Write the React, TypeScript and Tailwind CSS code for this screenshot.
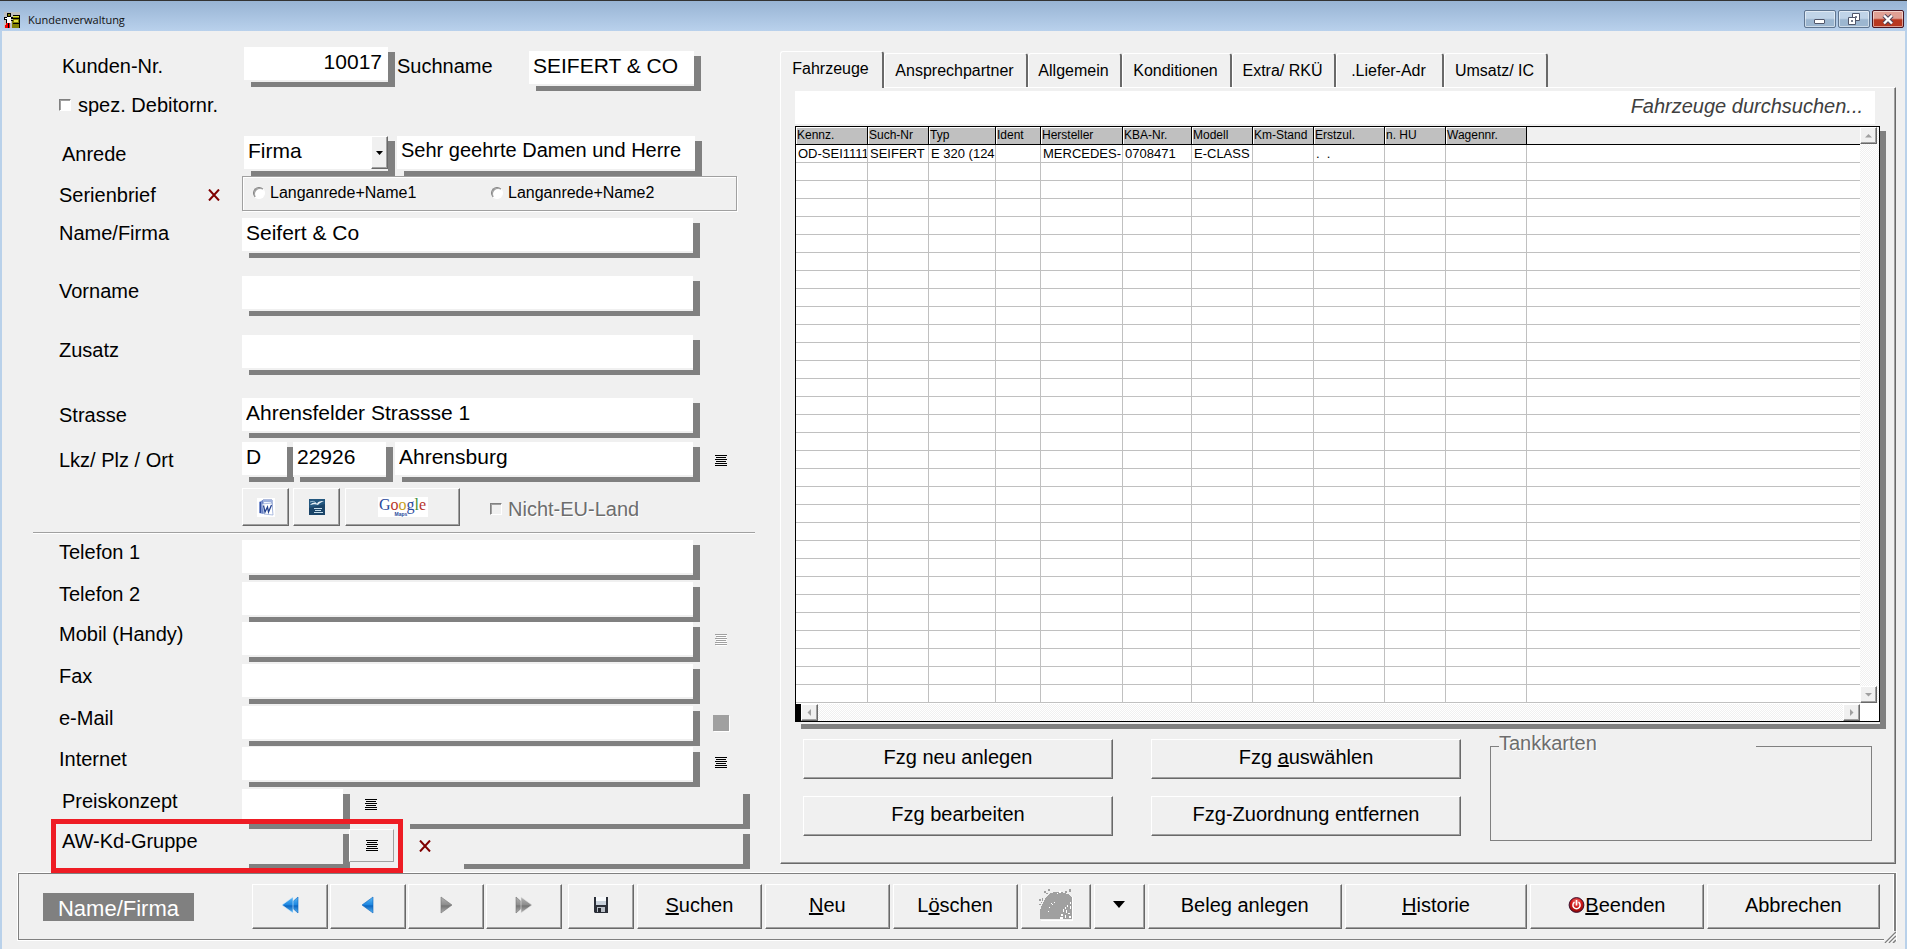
import { useState } from 'react';
import type { ReactNode } from 'react';
import clsx from 'clsx';

const raised =
  'border border-t-white border-l-white border-r-[#696969] border-b-[#696969] bg-[#f0f0f0] shadow-[inset_-1px_-1px_0_#a0a0a0]';
const dropShadow = 'shadow-[0_2px_0_#f0f0f0,7px_5px_0_#808080,7px_7px_0_#808080]';
const track = 'bg-[repeating-conic-gradient(#fff_0_25%,#f0f0f0_0_50%)] bg-[length:2px_2px]';

const tabs = [
  { name: 'Fahrzeuge', width: 'w-[104px]' },
  { name: 'Ansprechpartner', width: 'w-[144px]' },
  { name: 'Allgemein', width: 'w-[94px]' },
  { name: 'Konditionen', width: 'w-[110px]' },
  { name: 'Extra/ RKÜ', width: 'w-[104px]' },
  { name: '.Liefer-Adr', width: 'w-[108px]' },
  { name: 'Umsatz/ IC', width: 'w-[104px]' }
];

const columns = [
  { name: 'Kennz.', width: 'w-[72px]' },
  { name: 'Such-Nr', width: 'w-[61px]' },
  { name: 'Typ', width: 'w-[67px]' },
  { name: 'Ident', width: 'w-[45px]' },
  { name: 'Hersteller', width: 'w-[82px]' },
  { name: 'KBA-Nr.', width: 'w-[69px]' },
  { name: 'Modell', width: 'w-[61px]' },
  { name: 'Km-Stand', width: 'w-[61px]' },
  { name: 'Erstzul.', width: 'w-[71px]' },
  { name: 'n. HU', width: 'w-[61px]' },
  { name: 'Wagennr.', width: 'w-[81px]' }
];

const vehicles = [
  ['OD-SEI1111', 'SEIFERT', 'E 320 (124', '', 'MERCEDES-', '0708471', 'E-CLASS', '', '.\u00a0\u00a0.', '', '']
];
const rowCount = 31;

const ListIcon = ({ disabled = false }: { disabled?: boolean }) => (
  <svg width="12" height="12" viewBox="0 0 12 12" shapeRendering="crispEdges">
    {disabled && <path d="M1 1.500h11M2 3.500h10M1 5.500h11M2 7.500h10M1 9.500h11M1 11.500h11" stroke="#fff" />}
    <path d="M0 .5h12M1 2.500h10M0 4.500h12M1 6.500h10M0 8.500h12M0 10.500h12" stroke={disabled ? '#a0a0a0' : '#000'} />
  </svg>
);

const CrossIcon = () => (
  <svg width="12" height="12" viewBox="0 0 12 12">
    <path d="M1 .5l10 11M11 .5l-10 11" stroke="#800000" strokeWidth="2" />
  </svg>
);

const AppIcon = () => (
  <svg width="16" height="16" viewBox="0 0 16 16" shapeRendering="crispEdges">
    <path d="M0 0h16v16H0z" fill="#c0c0c0" />
    <path d="M9 3h7v13H8V9h1z" fill="#808000" />
    <path d="M9 3h7v1H9zM8 6h8v1H8zM9 11h6v1H9zM7 8h2v1H7zM15 4h1v12h-1z" fill="#000" />
    <path d="M9 4h6v1H9zM10 8h4v2h-4z" fill="#e0e040" />
    <path d="M3 1h4v4H3zM0 5h9v2H7v4H2V8H0z" fill="#000" />
    <path d="M4 2h2v2H4z" fill="#808000" />
    <path d="M3 5h4v6H3zM1 6h2v1H1z" fill="#fff" />
    <path d="M2 11h2v5H1v-3h1zM5 11h1v5H5z" fill="#f00000" />
    <path d="M4 11h1v5H4z" fill="#000" />
  </svg>
);

const ArrowIcon = ({ back = false, double = false }: { back?: boolean; double?: boolean }) => {
  const light = back ? '#5cb8f5' : '#b4b4b4';
  const dark = back ? '#0a64c0' : '#747474';
  const id = back ? 'arrow-back' : 'arrow-forward';
  return (
    <svg width="18" height="18" viewBox="0 0 18 18" className={back ? '' : '-scale-x-100'}>
      <defs>
        <linearGradient id={id} x1="0" y1="0" x2="0" y2="1">
          <stop offset="0" stopColor={light} />
          <stop offset="0.5" stopColor={back ? '#1c86e0' : '#8c8c8c'} />
          <stop offset="0.55" stopColor={dark} />
          <stop offset="1" stopColor={light} />
        </linearGradient>
      </defs>
      {double ? (
        <>
          <path d="M17 1v16l-9-8z" fill={`url(#${id})`} stroke={dark} strokeWidth="0.6" />
          <path d="M12 1v16L1 9z" fill={`url(#${id})`} stroke={back ? '#d4ecff' : '#e4e4e4'} strokeWidth="0.6" />
        </>
      ) : (
        <path d="M14 1v16L3 9z" fill={`url(#${id})`} stroke={dark} strokeWidth="0.6" />
      )}
    </svg>
  );
};

const SaveIcon = () => (
  <svg width="16" height="16" viewBox="0 0 16 16">
    <path d="M1 0h14v16H2l-1-1z" fill="#2b2f38" />
    <path d="M3 0h10v8H3z" fill="#c9d2dc" />
    <path d="M3 0h10v4H3z" fill="#f8fafc" />
    <path d="M4 10h8v5H4z" fill="#b8bec6" />
    <path d="M5 11h3v4H5z" fill="#23262d" />
  </svg>
);

const WordIcon = () => (
  <svg width="18" height="19" viewBox="0 0 18 19">
    <path d="M0 0h18v19H0z" fill="#fff" />
    <path d="M2 4l4-2v14l-4-1z" fill="#7d93cf" />
    <path d="M6 2h9v13H6z" fill="#f4f7fd" stroke="#5b74b8" />
    <path d="M6 3h9" stroke="#9db0dd" strokeWidth="2" />
    <path d="M5 6l10-1 1 12-9-1z" fill="#fff" stroke="#8ea3d6" strokeWidth="0.7" />
    <path d="M6.500 7.500l1.500 6.500 2.500-5 1 5L14.500 7" fill="none" stroke="#24428f" strokeWidth="1.300" />
    <path d="M3.500 4v11" stroke="#2f4b9c" />
  </svg>
);

const WriterIcon = () => (
  <svg width="16" height="16" viewBox="0 0 16 16">
    <path d="M0 0h16v16H0z" fill="#1a4468" />
    <path d="M0 0h16v5L0 9z" fill="#23577f" />
    <path d="M1 6c3-3 6-3 7-1 1-3 4-3 7-3-2 1-5 2-6 4-2-1-4-1-8 0z" fill="#e8f1f7" />
    <path d="M1 3c3-1 4-1 6 1" stroke="#9dbdd2" fill="none" />
    <path d="M5 9.500h8M6 11.500h6M5 13.500h9" stroke="#c4dcea" />
  </svg>
);

const FoxIcon = () => (
  <svg width="34" height="32" viewBox="0 0 34 32" shapeRendering="crispEdges">
    <path d="M2 31h31V8h1v24H2z" fill="#fff" />
    <path d="M1 30V21l2-5 3-6 4-5 5-2h7l7 2 4 3v22z" fill="#a0a0a0" />
    <path
      d="M5 2h2v2H5zM9 0h2v2H9zM7 4h2v1H7zM26 2h2v2h-2zM30 0h2v3h-2zM0 10h2v2H0zM3 9h1v3H3zM0 15h2v1H0zM2 13h1v1H2z"
      fill="#a0a0a0"
    />
    <path
      d="M18 4h1v1h-1zM20 2h2v2h-2zM12 14h1v1h-1zM15 13h1v1h-1zM10 18h1v1h-1zM9 22h1v1H9zM13 15h1v1h-1zM31 13h1v2h-1zM28 16h1v2h-1zM26 18h1v2h-1zM31 17h1v3h-1zM24 20h1v3h-1zM27 21h1v3h-1zM22 25h2v2h-2zM21 28h3v2h-3zM26 26h1v3h-1zM29 24h2v1h-2zM30 27h2v2h-2z"
      fill="#fff"
    />
  </svg>
);

const PowerIcon = () => (
  <svg width="17" height="16" viewBox="0 0 16 16">
    <defs>
      <radialGradient id="power" cx="0.500" cy="0.300" r="0.700">
        <stop offset="0" stopColor="#f28080" />
        <stop offset="0.500" stopColor="#d01818" />
        <stop offset="1" stopColor="#8c0808" />
      </radialGradient>
    </defs>
    <circle cx="8" cy="8" r="7.400" fill="url(#power)" stroke="#3a1030" />
    <path d="M6 5.200a3.600 3.600 0 1 0 4 0" fill="none" stroke="#fff" strokeWidth="1.500" />
    <path d="M8 3v5.500" stroke="#fff" strokeWidth="1.500" />
  </svg>
);

const Row = ({
  label,
  id,
  height,
  labelPad = '',
  inset = 'pl-[57px]',
  extra,
  children
}: {
  label: string;
  id: string;
  height: string;
  labelPad?: string;
  inset?: string;
  extra?: ReactNode;
  children: ReactNode;
}) => (
  <div className={clsx('relative flex items-start', height, inset)}>
    <div className={clsx('flex w-[183px] shrink-0 items-center justify-between', labelPad)}>
      <label htmlFor={id} className="leading-6 whitespace-nowrap">
        {label}
      </label>
      {extra}
    </div>
    {children}
  </div>
);

const Field = ({
  id,
  value = '',
  width = 'w-[451px]',
  size = 'text-[21px]',
  className = '',
  label,
  readOnly = false
}: {
  id: string;
  value?: string;
  width?: string;
  size?: string;
  className?: string;
  label?: string;
  readOnly?: boolean;
}) => (
  <input
    id={id}
    type="text"
    defaultValue={value}
    aria-label={label}
    readOnly={readOnly}
    className={clsx(
      'h-[33px] shrink-0 px-1 pb-1 outline-none',
      readOnly ? 'bg-[#f0f0f0]' : 'bg-white',
      dropShadow,
      width,
      size,
      className
    )}
  />
);

const box =
  'size-3 shrink-0 appearance-none border border-t-[#808080] border-l-[#808080] border-r-white border-b-white shadow-[inset_1px_1px_0_#a0a0a0]';

const CustomerForm = () => (
  <form className="w-[778px] shrink-0 pt-4">
    <Row label="Kunden-Nr." id="kdnr" height="h-[46px]" inset="pl-[59px]" labelPad="pt-[7px] pl-px">
      <Field id="kdnr" value="10017" width="w-[144px]" className="pr-1.5 text-right" />
      <label htmlFor="suchname" className="w-[141px] pt-[7px] pl-[9px] leading-6">
        Suchname
      </label>
      <Field id="suchname" value="SEIFERT & CO" width="w-[165px]" className="mt-1" />
    </Row>
    <label className="flex h-[43px] items-start pl-[57px] leading-6">
      <input type="checkbox" className={clsx(box, 'mt-1.5 mr-[7px] bg-white')} />
      spez. Debitornr.
    </label>
    <Row label="Anrede" id="anrede" height="h-10" inset="pl-[59px]" labelPad="pt-1.5 pl-px">
      <div className={clsx('relative h-[33px] w-[144px] shrink-0', dropShadow)}>
        <select id="anrede" className="size-full appearance-none bg-white px-1 pb-1 text-[21px] outline-none">
          <option>Firma</option>
        </select>
        <span className={clsx('pointer-events-none absolute top-0 right-0 flex h-full w-[17px] items-center justify-center', raised)}>
          <svg width="7" height="4" viewBox="0 0 7 4">
            <path d="M0 0h7L3.500 4z" />
          </svg>
        </span>
      </div>
      <Field
        id="briefanrede"
        label="Briefanrede"
        value="Sehr geehrte Damen und Herre"
        width="w-[298px]"
        size="text-xl"
        className="ml-[9px]"
      />
    </Row>
    <Row
      label="Serienbrief"
      id="lang1"
      height="h-[42px]"
      labelPad="pt-[7px]"
      extra={
        <button type="button" aria-label="Serienbrief löschen" className="mr-[22px]">
          <CrossIcon />
        </button>
      }
    >
      <div className="relative flex h-[35px] w-[495px] border border-[#a0a0a0] pl-2.5 text-base leading-6 shadow-[1px_1px_0_#fff,inset_1px_1px_0_#fff]">
        <label className="flex w-[238px] items-start pt-1">
          <input id="lang1" name="serienbrief" type="radio" className={clsx(box, 'mt-1.5 mr-[5px] rounded-full bg-white')} />
          Langanrede+Name1
        </label>
        <label className="flex items-start pt-1">
          <input name="serienbrief" type="radio" className={clsx(box, 'mt-1.5 mr-[5px] rounded-full bg-white')} />
          Langanrede+Name2
        </label>
      </div>
    </Row>
    <Row label="Name/Firma" id="name" height="h-[58px]" labelPad="pt-[3px]">
      <Field id="name" value="Seifert & Co" />
    </Row>
    <Row label="Vorname" id="vorname" height="h-[59px]" labelPad="pt-[3px]">
      <Field id="vorname" />
    </Row>
    <Row label="Zusatz" id="zusatz" height="h-[63px]" labelPad="pt-[3px]">
      <Field id="zusatz" />
    </Row>
    <Row label="Strasse" id="strasse" height="h-[44px]" labelPad="pt-[5px]">
      <Field id="strasse" value="Ahrensfelder Strassse 1" />
    </Row>
    <Row label="Lkz/ Plz / Ort" id="lkz" height="h-[46px]" labelPad="pt-1.5">
      <Field id="lkz" value="D" width="w-[45px]" />
      <Field id="plz" label="Plz" value="22926" width="w-[93px]" className="ml-1.5" />
      <Field id="ort" label="Ort" value="Ahrensburg" width="w-[298px]" className="ml-[9px]" />
      <button type="button" aria-label="Ort wählen" className="mt-[13px] ml-[22px]">
        <ListIcon />
      </button>
    </Row>
    <div className="flex h-[44px] items-start pl-[240px]">
      <button type="button" aria-label="Word" className={clsx('flex h-[38px] w-[47px] items-center justify-center', raised)}>
        <WordIcon />
      </button>
      <button type="button" aria-label="Writer" className={clsx('ml-1 flex h-[38px] w-[47px] items-center justify-center', raised)}>
        <WriterIcon />
      </button>
      <button type="button" className={clsx('ml-[5px] flex h-[38px] w-[115px] items-center justify-center', raised)}>
        <span className="relative h-5 w-[50px] bg-white font-['Liberation_Serif',serif] text-base leading-4">
          <span className="text-[#2a4a9c]">G</span>
          <span className="text-[#b8342c]">o</span>
          <span className="text-[#c8a020]">o</span>
          <span className="text-[#2a4a9c]">g</span>
          <span className="text-[#3c8c34]">l</span>
          <span className="text-[#b8342c]">e</span>
          <span className="absolute bottom-0 left-[17px] font-['Liberation_Sans',sans-serif] text-[5px] leading-[5px] font-bold text-[#2a4a9c]">
            Maps
          </span>
        </span>
      </button>
      <label className="flex items-start pt-[9px] pl-[30px] leading-6 text-[#6d6d6d] [text-shadow:1px_1px_0_#fff]">
        <input type="checkbox" disabled className={clsx(box, 'mt-1.5 mr-1.5')} />
        Nicht-EU-Land
      </label>
    </div>
    <hr className="mr-[25px] mb-1.5 ml-[31px] border-t border-[#a0a0a0] shadow-[0_1px_0_#fff]" />
    <div className="pt-px">
      <Row label="Telefon 1" id="tel1" height="h-[42px]">
        <Field id="tel1" />
      </Row>
      <Row label="Telefon 2" id="tel2" height="h-10">
        <Field id="tel2" />
      </Row>
      <Row label="Mobil (Handy)" id="mobil" height="h-[42px]">
        <Field id="mobil" />
        <button type="button" disabled aria-label="SMS senden" className="mt-3 ml-[22px]">
          <ListIcon disabled />
        </button>
      </Row>
      <Row label="Fax" id="fax" height="h-[42px]">
        <Field id="fax" />
      </Row>
      <Row label="e-Mail" id="email" height="h-[41px]">
        <Field id="email" />
        <button
          type="button"
          disabled
          aria-label="e-Mail senden"
          className="mt-[9px] ml-5 size-4 bg-[#a0a0a0] shadow-[1px_1px_0_#fff]"
        />
      </Row>
      <Row label="Internet" id="internet" height="h-[42px]">
        <Field id="internet" />
        <button type="button" aria-label="Internetseite öffnen" className="mt-2.5 ml-[22px]">
          <ListIcon />
        </button>
      </Row>
      <Row label="Preiskonzept" id="preis" height="h-10" labelPad="pl-[3px]">
        <Field id="preis" width="w-[101px]" />
        <button type="button" aria-label="Preiskonzept wählen" className="mt-2.5 ml-[22px]">
          <ListIcon />
        </button>
        <Field id="preistext" label="Preiskonzept Text" width="w-[340px]" className="ml-[26px]" readOnly />
      </Row>
      <Row label="AW-Kd-Gruppe" id="awgruppe" height="h-[42px]" labelPad="pl-[3px]">
        <Field id="awgruppe" width="w-[101px]" readOnly />
        <button
          type="button"
          aria-label="AW-Kd-Gruppe wählen"
          className="relative ml-1.5 flex h-[33px] w-[45px] items-center justify-center border border-t-white border-r-[#a0a0a0] border-b-[#a0a0a0] border-l-white bg-[#f0f0f0]"
        >
          <ListIcon />
        </button>
        <button type="button" aria-label="AW-Kd-Gruppe löschen" className="mt-[11px] ml-[25px]">
          <CrossIcon />
        </button>
        <Field id="awtext" label="AW-Kd-Gruppe Text" width="w-[286px]" className="ml-[26px]" readOnly />
        <div className="pointer-events-none absolute -top-2.5 left-[49px] z-10 h-[54px] w-[352px] border-[5px] border-[#ee1c24]" />
      </Row>
    </div>
  </form>
);

const ScrollButton = ({ path, label }: { path: string; label: string }) => (
  <button type="button" aria-label={label} className={clsx('flex size-[17px] shrink-0 items-center justify-center', raised)}>
    <svg width="7" height="7" viewBox="0 0 7 7">
      <path d={path} fill="#a0a0a0" />
    </svg>
  </button>
);

const VehicleTable = () => (
  <div className="border border-black bg-white shadow-[0_2px_0_#f0f0f0,6px_5px_0_#808080,6px_7px_0_#808080]">
    <div className="flex">
      <table className="w-full min-w-0 flex-1 table-fixed border-separate border-spacing-0">
        <thead>
          <tr className="h-[18px]">
            {columns.map((col) => (
              <th
                key={col.name}
                className={clsx(
                  'overflow-hidden border-r border-b border-black bg-[#c0c0c0] p-0 pl-px text-left text-[12px] leading-[17px] font-normal whitespace-nowrap shadow-[inset_1px_1px_0_#fff]',
                  col.width
                )}
              >
                {col.name}
              </th>
            ))}
            <th aria-label="leer" className="border-b border-black bg-[#f0f0f0] p-0" />
          </tr>
        </thead>
        <tbody>
          {Array.from({ length: rowCount }, (_, i) => (
            <tr key={i} className="h-[18px]">
              {columns.map((col, c) => (
                <td
                  key={col.name}
                  className="overflow-hidden border-r border-b border-[#c0c0c0] p-0 pl-0.5 text-[13px] leading-[17px] whitespace-nowrap"
                >
                  {vehicles[i]?.[c]}
                </td>
              ))}
              <td className="border-b border-[#c0c0c0] p-0" />
            </tr>
          ))}
        </tbody>
      </table>
      <div className={clsx('flex w-[19px] flex-col justify-between', track)}>
        <ScrollButton label="Nach oben" path="M0 5.500h7L3.500 2z" />
        <ScrollButton label="Nach unten" path="M0 2h7L3.500 5.500z" />
      </div>
    </div>
    <div className="flex pt-px">
      <div className="w-[5px] bg-black" />
      <div className={clsx('flex flex-1 justify-between', track)}>
        <ScrollButton label="Nach links" path="M5 0v7L1.500 3.500z" />
        <ScrollButton label="Nach rechts" path="M2 0v7l3.500-3.500z" />
      </div>
      <div className="w-[19px] bg-white" />
    </div>
  </div>
);

const VehiclePanel = () => {
  const [active, setActive] = useState('Fahrzeuge');
  return (
    <section className="mr-[9px] min-w-0 flex-1 pt-5">
      <div role="tablist" className="flex h-9 items-end text-base">
        {tabs.map((tab) => (
          <button
            key={tab.name}
            type="button"
            role="tab"
            aria-selected={active === tab.name}
            onClick={() => setActive(tab.name)}
            className={clsx(
              'relative rounded-t-[3px] border-t border-r-2 border-l border-t-white border-r-[#696969] border-l-white bg-[#f0f0f0] pr-0.5 whitespace-nowrap',
              tab.width,
              active === tab.name ? 'z-10 -mb-px h-[37px] pb-0.5' : 'h-[34px]'
            )}
          >
            {tab.name}
          </button>
        ))}
      </div>
      <div className={clsx('pt-[3px] pr-[15px] pb-[27px] pl-[14px]', raised)}>
        <input
          type="text"
          aria-label="Fahrzeuge durchsuchen"
          placeholder="Fahrzeuge durchsuchen..."
          className="mb-0.5 block h-[33px] w-[calc(100%-5px)] bg-white pr-3 pb-0.5 text-right text-xl italic outline-none placeholder:text-[#404040]"
        />
        <VehicleTable />
        <div className="mt-[17px] grid grid-cols-[310fr_319fr_382fr] items-start gap-x-[29px] px-2">
          <div className="flex flex-col gap-[17px]">
            <button type="button" className={clsx('h-10 pb-1', raised)}>
              Fzg neu anlegen
            </button>
            <button type="button" className={clsx('h-10 pb-1', raised)}>
              Fzg bearbeiten
            </button>
          </div>
          <div className="ml-[9px] flex flex-col gap-[17px]">
            <button type="button" className={clsx('h-10 pb-1', raised)}>
              Fzg <u>a</u>uswählen
            </button>
            <button type="button" className={clsx('h-10 pb-1', raised)}>
              Fzg-Zuordnung entfernen
            </button>
          </div>
          <fieldset className="-mt-2 -mb-1.5 h-[110px] min-w-0 border border-[#808080] pl-2 text-[#6d6d6d]">
            <legend className="w-[69%] pb-1.5 leading-6 [text-shadow:1px_1px_0_#fff]">Tankkarten</legend>
          </fieldset>
        </div>
      </div>
    </section>
  );
};

const BarButton = ({ width, label, children }: { width: string; label?: string; children: ReactNode }) => (
  <button
    type="button"
    aria-label={label}
    className={clsx('flex h-[45px] items-center justify-center pb-1 whitespace-pre', raised, width)}
  >
    {children}
  </button>
);

const ButtonBar = () => (
  <footer className="relative mt-0.5 mr-[9px] mb-2 ml-4 flex h-[67px] items-center gap-[3px] border border-r-2 border-[#808080] pr-3.5 pl-6 shadow-[0_0_0_1px_#fff,inset_-1px_0_0_#fff]">
    <span className="mr-[55px] flex h-7 w-[151px] items-center justify-center bg-[#808080] pt-1.5 text-[22px] text-white">
      Name/Firma
    </span>
    <div className="mr-[3px] flex gap-0.5">
      <BarButton width="w-[76px]" label="Erster Satz">
        <ArrowIcon back double />
      </BarButton>
      <BarButton width="w-[76px]" label="Voriger Satz">
        <ArrowIcon back />
      </BarButton>
      <BarButton width="w-[76px]" label="Nächster Satz">
        <ArrowIcon />
      </BarButton>
      <BarButton width="w-[76px]" label="Letzter Satz">
        <ArrowIcon double />
      </BarButton>
    </div>
    <BarButton width="w-[66px]" label="Speichern">
      <SaveIcon />
    </BarButton>
    <BarButton width="flex-[124]">
      <u>S</u>uchen
    </BarButton>
    <BarButton width="flex-[124]">
      <u>N</u>eu
    </BarButton>
    <BarButton width="flex-[124]">
      L<u>ö</u>schen
    </BarButton>
    <BarButton width="w-[70px]" label="Bild">
      <FoxIcon />
    </BarButton>
    <BarButton width="w-[51px]" label="Auswahl">
      <svg width="12" height="7" viewBox="0 0 12 7">
        <path d="M0 0h12L6 7z" />
      </svg>
    </BarButton>
    <BarButton width="flex-[194]">Beleg anlegen</BarButton>
    <BarButton width="flex-[182]">
      <u>H</u>istorie
    </BarButton>
    <BarButton width="flex-[173]">
      <PowerIcon />
      <u>B</u>eenden
    </BarButton>
    <BarButton width="flex-[173]">Abbrechen</BarButton>
    <svg width="12" height="12" viewBox="0 0 12 12" className="absolute -right-0.5 -bottom-1 bg-[#f0f0f0]">
      <path d="M1 12L12 1M5 12l7-7M9 12l3-3" stroke="#808080" strokeWidth="1.500" />
      <path d="M2.500 12L12 2.500M6.500 12L12 6.500" stroke="#fff" />
    </svg>
  </footer>
);

const WindowButton = ({ label, close = false, children }: { label: string; close?: boolean; children: ReactNode }) => (
  <button
    type="button"
    aria-label={label}
    className={clsx(
      'flex h-[18px] w-8 items-center justify-center rounded-[2px] border shadow-[inset_0_0_0_1px_#ffffff80]',
      close
        ? 'border-[#4a1420] bg-linear-to-b from-[#e0a094] from-45% to-[#b83820] to-55%'
        : 'border-[#5f7590] bg-linear-to-b from-[#c0d4e8] from-45% to-[#9cb6d0] to-55%'
    )}
  >
    {children}
  </button>
);

const TitleBar = () => (
  <header className="flex h-[31px] items-start border-t border-[#333] bg-linear-to-b from-[#98b4d4] to-[#b9d1ec] pl-1">
    <div className="flex items-center gap-2 pt-2.5 font-['Open_Sans',sans-serif] text-[11px] leading-[18px] text-[#111]">
      <AppIcon />
      <h1>Kundenverwaltung</h1>
    </div>
    <div className="mr-[3px] ml-auto flex gap-0.5 pt-[9px]">
      <WindowButton label="Minimieren">
        <svg width="12" height="12" viewBox="0 0 12 12">
          <rect x="0.500" y="6.500" width="10" height="4" rx="0.500" fill="#fff" stroke="#50566a" />
        </svg>
      </WindowButton>
      <WindowButton label="Wiederherstellen">
        <svg width="12" height="12" viewBox="0 0 12 12">
          <path d="M4.500 .5h7v7h-7zM7.500 3.500h1v1h-1z" fill="#fff" fillRule="evenodd" stroke="#50566a" />
          <path d="M.5 4.500h7v7h-7zM3.500 7.500h1v1h-1z" fill="#fff" fillRule="evenodd" stroke="#50566a" />
        </svg>
      </WindowButton>
      <WindowButton label="Schließen" close>
        <svg width="12" height="11" viewBox="0 0 12 11">
          <path d="M2 1.500l8 8M10 1.500l-8 8" stroke="#50455a" strokeWidth="4.400" />
          <path d="M2 1.500l8 8M10 1.500l-8 8" stroke="#fff" strokeWidth="2.400" />
        </svg>
      </WindowButton>
    </div>
  </header>
);

export default function App() {
  return (
    <div className="flex min-h-screen flex-col bg-[#f0f0f0] font-['Liberation_Sans',Arial,sans-serif] text-xl text-black">
      <TitleBar />
      <main className="flex-1 border-r-2 border-l-2 border-r-[#b9d1ea] border-l-[#b9d1ea]">
        <div className="flex items-start">
          <CustomerForm />
          <VehiclePanel />
        </div>
        <ButtonBar />
      </main>
    </div>
  );
}
